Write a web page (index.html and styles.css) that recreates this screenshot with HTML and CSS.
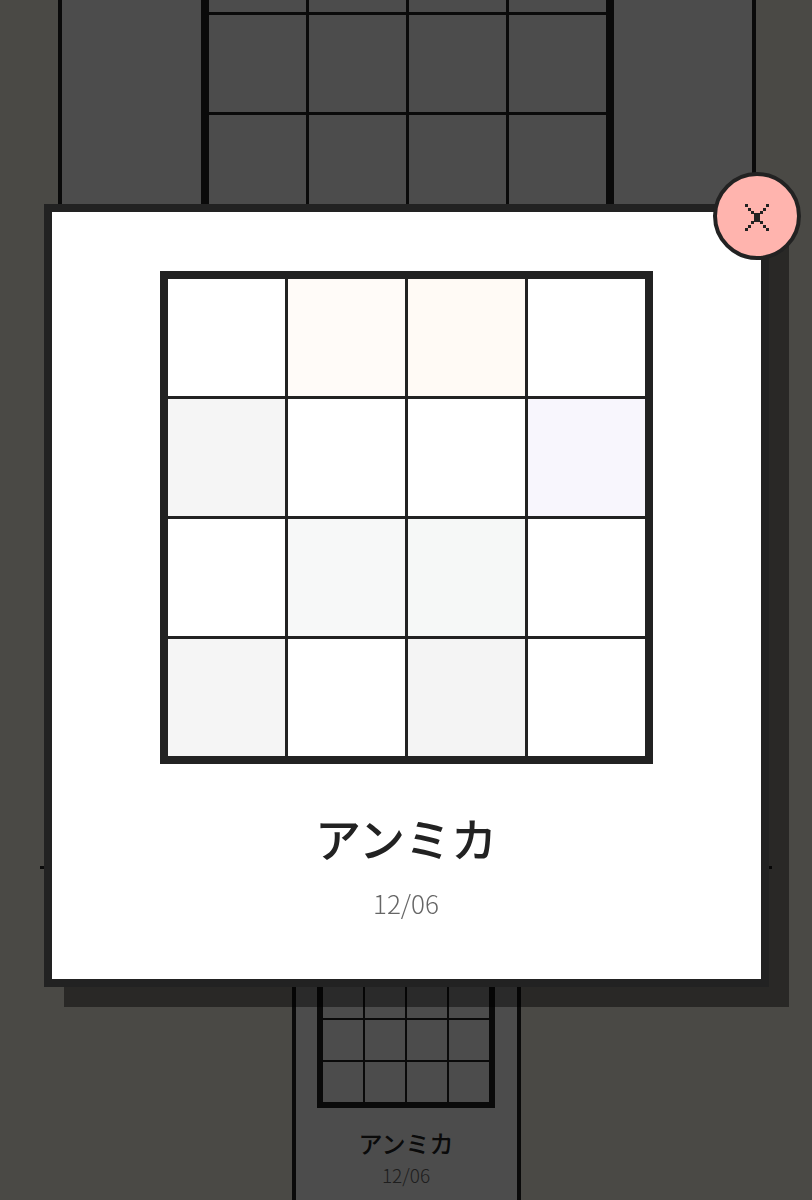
FILE: index.html
```html
<!DOCTYPE html>
<html lang="ja">
    <head>
        <meta charset="UTF-8">
        <meta name="viewport" content="width=device-width, initial-scale=1.0">
        <link rel="stylesheet" href="styles.css">
        <title>アンミカ</title>
    </head>

    <body>
        <!-- page underneath, already scrolled a bit -->
        <main class="feed">
            <article class="card card-lg">
                <div class="grid grid-lg">
                    <div></div><div></div><div></div><div></div>
                    <div></div><div></div><div></div><div></div>
                    <div></div><div></div><div></div><div></div>
                    <div></div><div></div><div></div><div></div>
                </div>
                <h2 class="card-title">アンミカ</h2>
                <p class="card-date">12/06</p>
            </article>

            <hr class="divider">

            <article class="card card-sm">
                <div class="grid grid-sm">
                    <div></div><div></div><div></div><div></div>
                    <div></div><div></div><div></div><div></div>
                    <div></div><div></div><div></div><div></div>
                    <div></div><div></div><div></div><div></div>
                </div>
                <h2 class="card-title">アンミカ</h2>
                <p class="card-date">12/06</p>
            </article>
        </main>

        <div class="overlay">
            <div class="modal">
                <button class="close" aria-label="閉じる">
                    <svg width="24" height="27" viewBox="0 0 24 27" shape-rendering="crispEdges">
                        <g fill="#222">
                            <rect x="0" y="0" width="3" height="3"/>
                            <rect x="3" y="3.5" width="3" height="3"/>
                            <rect x="6" y="7" width="3" height="3"/>
                            <rect x="21" y="0" width="3" height="3"/>
                            <rect x="18" y="3.5" width="3" height="3"/>
                            <rect x="15" y="7" width="3" height="3"/>
                            <rect x="9" y="9" width="6" height="9"/>
                            <rect x="6" y="17" width="3" height="3"/>
                            <rect x="3" y="20.5" width="3" height="3"/>
                            <rect x="0" y="24" width="3" height="3"/>
                            <rect x="15" y="17" width="3" height="3"/>
                            <rect x="18" y="20.5" width="3" height="3"/>
                            <rect x="21" y="24" width="3" height="3"/>
                        </g>
                    </svg>
                </button>

                <div class="grid grid-modal">
                    <div></div><div class="peach"></div><div class="cream"></div><div></div>
                    <div class="gray"></div><div></div><div></div><div class="lilac"></div>
                    <div></div><div class="mist"></div><div class="mint"></div><div></div>
                    <div class="gray"></div><div></div><div class="gray2"></div><div></div>
                </div>

                <h1 class="modal-title">アンミカ</h1>
                <p class="modal-date">12/06</p>
            </div>
        </div>
    </body>
</html>
```

FILE: styles.css
```css
* { box-sizing: border-box; }

html, body { margin: 0; }

body {
    background-color: #f7f3e6;
    font-family: "Noto Sans CJK JP", "Noto Sans", sans-serif;
    color: #222;
    overflow: hidden;
}

h1, h2, p { margin: 0; font-weight: 500; }

/* ---- page underneath ---- */

.feed { margin-top: -137px; }

.card {
    background: #fff; border: 4px solid #222;
    display: flex; flex-direction: column; align-items: center;
    text-align: center;
}

.card-lg { width: 698px; margin-left: 58px; padding: 40px 0 60px; }
.card-lg .card-title { margin-top: 40px; font-size: 44px; line-height: 1.3; }
.card-lg .card-date { margin-top: 8px; font-size: 24px; line-height: 1.3; color: #666; font-weight: 300; }

.divider {
    margin: 346px 40px 0; width: 732px; height: 3px;
    border: none; background: #222;
}

.card-sm { width: 229px; margin: 36px auto 0; padding: 21px 0 24px; }
.card-sm .card-title { margin-top: 20px; font-size: 24px; line-height: 30px; }
.card-sm .card-date { margin-top: 6px; font-size: 19px; line-height: 22px; color: #666; font-weight: 300; }

.grid { display: grid; background: #222; }
.grid > div { background: #fff; }

.grid-lg { grid-template-columns: repeat(4, 97px); grid-auto-rows: 97px; gap: 3px; border: 8px solid #222; }
.grid-sm { grid-template-columns: repeat(4, 40px); grid-auto-rows: 40px; gap: 2px; border: 6px solid #222; }

/* ---- modal ---- */

.overlay {
    position: fixed; inset: 0;
    background: rgba(0, 0, 0, 0.7);
    display: flex; align-items: center; justify-content: center;
    padding-bottom: 9px;
}

.modal {
    position: relative; width: 725px;
    background: #fff; border: 8px solid #222;
    box-shadow: 20px 20px 0 rgba(0, 0, 0, 0.45);
    padding: 59px 0 61px;
    display: flex; flex-direction: column; align-items: center;
}

.close {
    position: absolute; top: -40px; right: -40px;
    width: 88px; height: 88px; padding: 3px 0 0;
    border: 4px solid #222; border-radius: 50%;
    background: #ffb4ae; cursor: pointer;
    display: flex; align-items: center; justify-content: center;
}

.grid-modal { grid-template-columns: repeat(4, 117px); grid-auto-rows: 117px; gap: 3px; border: 8px solid #222; }

.grid-modal .peach { background: #fffbf8; }
.grid-modal .cream { background: #fffaf5; }
.grid-modal .gray { background: #f5f5f5; }
.grid-modal .gray2 { background: #f4f4f4; }
.grid-modal .lilac { background: #f8f6fd; }
.grid-modal .mist { background: #f7f8f8; }
.grid-modal .mint { background: #f6f8f7; }

.modal-title {
    margin-top: 46px; font-size: 46px; line-height: 55px;
    letter-spacing: 0; color: #222;
}

.modal-date {
    margin-top: 22px; font-size: 26px; line-height: 31px;
    color: #666; font-weight: 300;
}
```
